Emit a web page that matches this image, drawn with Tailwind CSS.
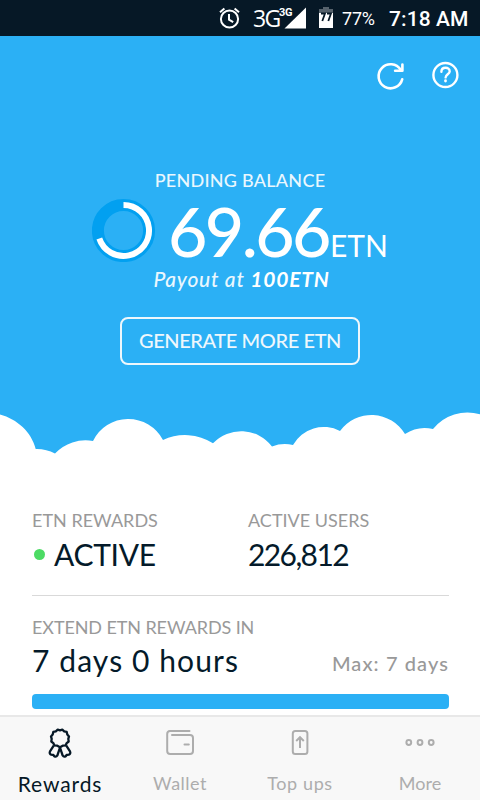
<!DOCTYPE html>
<html lang="en">
<head>
    <meta charset="UTF-8">
    <meta name="viewport" content="width=device-width, initial-scale=1.0">
    <title>Rewards</title>
    <script src="https://cdn.jsdelivr.net/npm/@tailwindcss/browser@4"></script>
</head>
<body class="bg-white">
    <div class="w-[480px] h-[800px] overflow-hidden flex flex-col font-['Lato',sans-serif] text-[#041a2a]">

        <!-- Status bar -->
        <div class="h-9 shrink-0 bg-[#061826] text-white flex items-center font-['Roboto',sans-serif] pl-[219px] whitespace-nowrap">
            <svg class="w-[22px] h-[24px] shrink-0" viewBox="0 0 22 24" fill="none" stroke="currentColor" stroke-width="2">
                <circle cx="10.5" cy="13" r="8.6"/>
                <path d="M1 6.2 5.4 2.5M15.6 2.5 20 6.2M10 8v5.7l4.2 2.5"/>
            </svg>
            <span class="ml-[12px] w-[26px] font-['Open_Sans',sans-serif] text-[23px] leading-9 tracking-[-1.6px]">3G</span>
            <div class="relative w-[28px] h-[22px] shrink-0">
                <svg class="w-full h-full" viewBox="0 0 28 22"><path d="M27 0.5V21.5H5.5z" fill="#fff"/></svg>
                <span class="absolute left-0 top-0 text-[11px] leading-3 font-bold tracking-[-0.3px]">3G</span>
            </div>
            <svg class="ml-[12px] w-[14px] h-[22px] shrink-0" viewBox="0 0 14 22">
                <path d="M4 0h6v2h4v5H0V2h4z" fill="#56626c"/>
                <path d="M0 6h14v15H0z" fill="#fff"/>
                <path d="M2 6.5h4L3.3 14M8 6.5h4L9.3 14" fill="none" stroke="#061826" stroke-width="1.8"/>
            </svg>
            <span class="ml-[9px] w-[47px] text-[18px] leading-9 pt-0.5 tracking-[-0.2px]">77%</span>
            <span class="text-[21px] leading-9 font-medium tracking-[0.1px] pt-0.5">7:18 AM</span>
        </div>

        <!-- Balance header -->
        <div class="h-[430px] shrink-0 bg-[#2bb0f5] text-white flex flex-col items-center">
            <div class="w-full flex justify-end items-center gap-[27px] pt-[25px] pr-[21px]">
                <svg class="w-[29px] h-7 overflow-visible" viewBox="0 0 29 28" fill="none" stroke="currentColor" stroke-width="2.6" stroke-linecap="round" stroke-linejoin="round">
                    <path d="M26.2 18.3A12 12 0 1 1 24.7 8.8"/>
                    <path d="M26.4 3.5v6.2h-7.3"/>
                </svg>
                <svg class="w-[27px] h-7" viewBox="0 0 27 28" fill="none" stroke="currentColor" stroke-width="2.4" stroke-linecap="round" stroke-linejoin="round">
                    <circle cx="13.4" cy="14" r="12"/>
                    <path d="M9.4 10.7c0-5.2 8.3-5.2 8.3-.3 0 2.5-4.1 3.2-4.1 6"/>
                    <path d="M13.5 19.7v.3" stroke-width="2.8"/>
                </svg>
            </div>

            <p class="mt-[81px] text-[18px] leading-5 tracking-[0.25px] font-medium opacity-90">PENDING BALANCE</p>

            <div class="mt-[8px] h-16 w-[296px] flex items-center">
                <svg class="w-16 h-16 shrink-0" viewBox="0 0 64 64" fill="none">
                    <circle cx="31.5" cy="32.5" r="25.6" stroke="#02a0f0" stroke-width="12"/>
                    <path d="M31.5 7A25.5 25.5 0 1 1 7.3 40.5" stroke="#fff" stroke-width="6"/>
                </svg>
                <div class="ml-[12px] h-16 flex items-baseline">
                    <span class="w-[162px] text-[68px] leading-[65px] tracking-[-2.6px] font-medium">69.66</span>
                    <span class="text-[30px] leading-8">ETN</span>
                </div>
            </div>

            <p class="mt-[5px] pl-[3px] text-[21px] leading-6 italic tracking-[0.75px] font-medium"><span class="opacity-90">Payout at</span> <b class="tracking-[0.8px]">100ETN</b></p>

            <button class="mt-[26px] w-60 h-12 shrink-0 border-2 border-[#eef7fc] rounded-lg pb-0.5 text-[20px] text-[#eef7fc] tracking-[-0.4px] font-medium">GENERATE MORE ETN</button>

            <!-- Clouds -->
            <svg class="mt-[35px] w-[480px] h-[70px] shrink-0" viewBox="0 400 480 70">
                <path fill="#fff" d="M0 414.5C17 419 31.5 432 35.7 449Q46 448.7 55 453.5A42 42 0 0 1 93 441A39.2 39.2 0 0 1 163 440A52 52 0 0 1 213 443.3A38.7 38.7 0 0 1 272 446.5A35 35 0 0 1 293 445A35 35 0 0 1 340 431A39 39 0 0 1 405 434A36 36 0 0 1 433 429A44 44 0 0 1 480 414.3V470H0z"/>
            </svg>
        </div>

        <!-- Rewards details -->
        <div class="h-[249px] shrink-0 px-8 pr-[31px] pt-[44px]">
            <div class="grid grid-cols-[216px_1fr] border-b border-[#d9d9d9] h-[86px]">
                <div>
                    <p class="text-[18px] leading-5 text-[#999]">ETN REWARDS</p>
                    <p class="mt-[6px] flex items-center text-[30px] leading-9 tracking-[-0.3px]">
                        <span class="ml-0.5 mr-[9px] size-[11px] rounded-full bg-[#4cdb64]"></span>ACTIVE
                    </p>
                </div>
                <div>
                    <p class="text-[18px] leading-5 text-[#999]">ACTIVE USERS</p>
                    <p class="mt-[6px] text-[30px] leading-9 tracking-[-1.6px]">226,812</p>
                </div>
            </div>
            <p class="mt-[21px] text-[18px] leading-5 text-[#999] tracking-[-0.1px]">EXTEND ETN REWARDS IN</p>
            <div class="mt-[5px] h-[37px] flex justify-between items-start">
                <span class="text-[30px] leading-9 tracking-[1.1px]">7 days 0 hours</span>
                <span class="pt-[9px] text-[20px] leading-6 text-[#999] tracking-[1.1px] font-medium">Max: 7 days</span>
            </div>
            <div class="mt-[15px] h-[15px] rounded bg-[#2bb0f5]"></div>
        </div>

        <!-- Bottom navigation -->
        <div class="h-[85px] shrink-0 border-t-2 border-[#e8e8e8] bg-[#f8f8f8] grid grid-cols-4 text-[#adadad] text-[18px] leading-5">
            <div class="flex flex-col items-center pt-[10px] text-[#061826]">
                <svg class="w-6 h-8" viewBox="0 0 24 32" fill="none" stroke="currentColor" stroke-width="2.3" stroke-linejoin="round">
                    <path d="M12 3.3l2.3-.7 1.9 1.7 2.5.6.6 2.6 1.7 1.9-.7 2.5.4 2.6-2 1.6-1 2.2-2.6.3L12 20.3l-3.1-1.7-2.6-.3-1-2.2-2-1.6.4-2.6L3 9.4l1.7-1.9.6-2.6 2.5-.6 1.9-1.7z"/>
                    <path d="M5.7 18.6 2 24.4q-1 2.4 1.2 3.3l2.2.3.9 1.2q1.9 1.1 3.1-.8L12 20.6l2.6 7.8q1.2 1.9 3.1.8l.9-1.2 2.2-.3q2.2-.9 1.2-3.3l-3.7-5.8"/>
                </svg>
                <span class="mt-[15px] text-[21px] tracking-[0.9px]">Rewards</span>
            </div>
            <div class="flex flex-col items-center pt-[11px]">
                <svg class="w-[30px] h-8" viewBox="0 0 30 32" fill="none" stroke="currentColor" stroke-width="2" stroke-linecap="round">
                    <path d="M24.5 2.9H5a3 3 0 0 0-2.8 3V23a3 3 0 0 0 3 3H25a3 3 0 0 0 3-3V10a3 3 0 0 0-3-3H7M19.5 16.6h4.3"/>
                </svg>
                <span class="mt-[13px] tracking-[0.5px]">Wallet</span>
            </div>
            <div class="flex flex-col items-center pt-[11px]">
                <svg class="w-[18px] h-8" viewBox="0 0 18 32" fill="none" stroke="currentColor" stroke-width="2">
                    <rect x="1.8" y="2.9" width="14.6" height="23.2" rx="2.5"/>
                    <path d="M9 20V9.4M5.2 13 9 9.2l3.8 3.8"/>
                </svg>
                <span class="mt-[13px] tracking-[0.6px]">Top ups</span>
            </div>
            <div class="flex flex-col items-center pt-[11px]">
                <svg class="w-[30px] h-8" viewBox="0 0 30 32" fill="none" stroke="currentColor" stroke-width="2">
                    <circle cx="3.8" cy="14.5" r="2.4"/>
                    <circle cx="15" cy="14.5" r="2.4"/>
                    <circle cx="26.2" cy="14.5" r="2.4"/>
                </svg>
                <span class="mt-[13px]">More</span>
            </div>
        </div>
    </div>
</body>
</html>
